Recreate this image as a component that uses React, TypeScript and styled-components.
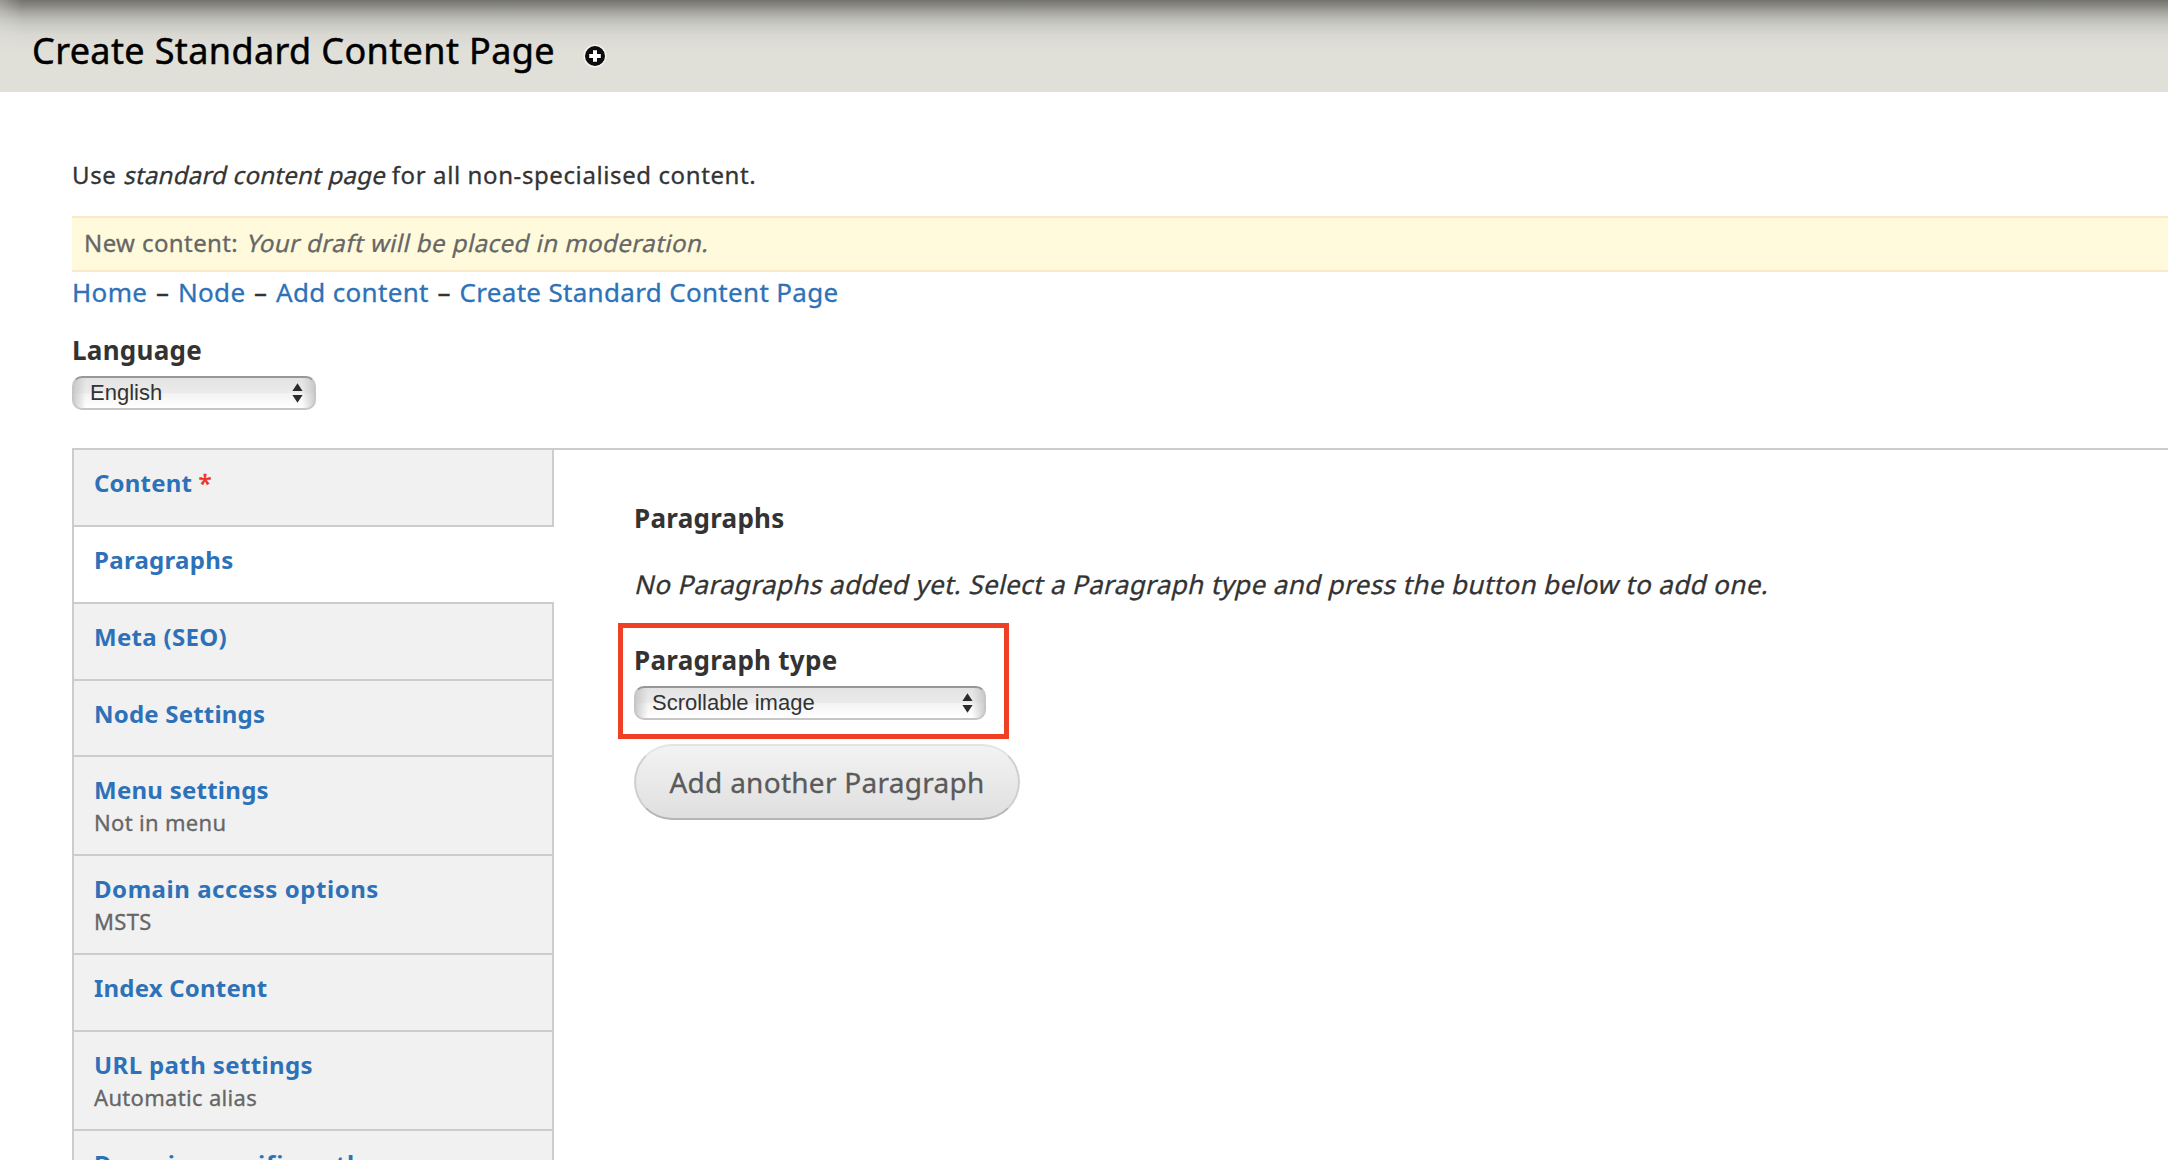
import React from "react";
import styled, { createGlobalStyle } from "styled-components";

const GlobalStyle = createGlobalStyle`
  * { box-sizing: border-box; }
  body {
    margin: 0;
    background: #fff;
    color: #333;
    font-family: "Noto Sans", "Open Sans", sans-serif;
  }
`;

const Page = styled.div`
  height: 1160px;
  overflow: hidden;
  white-space: nowrap;
`;

const Branding = styled.header`
  display: flex;
  align-items: flex-start;
  height: 92px;
  padding: 9px 0 0 32px;
  background:
    linear-gradient(to right, rgba(224, 224, 216, 0.35), rgba(224, 224, 216, 0) 22px),
    linear-gradient(#74746f 0, #8a8a84 6px, #a5a59e 12px, #bcbdb6 19px, #cccdc6 26px, #d8d7d1 34px, #dddcd6 43px, #e0e0d8 53px);
`;

const PageTitle = styled.h1`
  margin: 0;
  color: #000;
  font-size: 36px;
  font-weight: 400;
  line-height: 84px;
  letter-spacing: 0.38px;
  -webkit-text-stroke: 0.5px currentColor;
`;

const ShortcutIcon = styled.svg`
  margin: 35px 0 0 28px;
`;

const Main = styled.main`
  display: flex;
  flex-direction: column;
  padding-left: 72px;
`;

const HelpText = styled.p`
  margin: 65px 0 23px;
  font-size: 24px;
  line-height: 36px;
  letter-spacing: 0.6px;
  -webkit-text-stroke: 0.3px currentColor;
`;

/* Upright glyphs slanted about their baseline. */
const Slanted = styled.em<{ $tracking?: number }>`
  display: inline-block;
  font-style: normal;
  letter-spacing: ${(p) => p.$tracking ?? 0.25}px;
  transform: skewX(-13deg);
  transform-origin: 0 75%;
`;

const Notice = styled.div`
  height: 56px;
  padding-left: 12px;
  border: solid #fbe8c6;
  border-width: 2px 0;
  background: #fefadb;
  color: #666;
  font-size: 24px;
  line-height: 49px;
  letter-spacing: 0.4px;
  -webkit-text-stroke: 0.3px currentColor;
`;

const Breadcrumb = styled.nav`
  display: flex;
  gap: 8.7px;
  font-size: 26px;
  line-height: 40px;
  letter-spacing: 0.32px;
  -webkit-text-stroke: 0.3px currentColor;
`;

const Link = styled.a`
  color: #2d72b8;
`;

const Field = styled.div`
  display: flex;
  flex-direction: column;
  align-items: flex-start;
  gap: 8px;
`;

const LanguageField = styled(Field)`
  margin: 20px 0 38px;
`;

const Highlight = styled(Field)`
  width: 391px;
  height: 116px;
  margin: 21px 0 5px -16px;
  padding: 14px 0 0 11px;
  border: 5px solid #ee4025;
`;

const Label = styled.label`
  font-size: 26px;
  font-weight: 700;
  line-height: 36px;
  letter-spacing: 0.27px;
`;

const SelectBox = styled.div<{ $width: number }>`
  display: flex;
  align-items: center;
  justify-content: space-between;
  width: ${(p) => p.$width}px;
  height: 34px;
  padding: 0 11px 0 16px;
  border: 2px solid #c6c6c6;
  border-top-color: #979797;
  border-radius: 10px;
  background:
    linear-gradient(to right, rgba(190, 190, 190, 0.7), rgba(220, 220, 220, 0) 12px),
    linear-gradient(to left, rgba(190, 190, 190, 0.7), rgba(220, 220, 220, 0) 12px),
    linear-gradient(#e3e3e3, #ebebeb 50%, #f3f3f3 52%, #fff);
  font-family: "Liberation Sans", Arial, sans-serif;
  font-size: 22px;
  line-height: 30px;
`;

const TabsLayout = styled.section`
  display: flex;
  border-top: 2px solid #ccc;
`;

const TabList = styled.ul`
  width: 482px;
  margin: 0;
  padding: 0;
  border-left: 2px solid #ccc;
  list-style: none;
`;

const Tab = styled.li<{ $active?: boolean; $height: number }>`
  height: ${(p) => p.$height}px;
  padding: 15px 0 0 20px;
  border-bottom: 2px solid #ccc;
  background: ${(p) => (p.$active ? "#fff" : "#f1f1f1")};
  box-shadow: ${(p) => (p.$active ? "none" : "inset -2px 0 0 #cdcdcd")};
`;

const TabTitle = styled.div<{ $tracking: number }>`
  color: #2d72b8;
  font-size: 24px;
  font-weight: 700;
  line-height: 35px;
  letter-spacing: ${(p) => p.$tracking}px;
`;

const Required = styled.span`
  color: #ee3124;
  font-weight: 400;
  -webkit-text-stroke: 0.5px currentColor;
`;

const TabSummary = styled.div`
  color: #666;
  font-size: 22px;
  line-height: 30px;
  letter-spacing: 0.32px;
  -webkit-text-stroke: 0.3px currentColor;
`;

const Pane = styled.div`
  display: flex;
  flex-direction: column;
  align-items: flex-start;
  padding: 50px 0 0 80px;
`;

const EmptyText = styled(Slanted)`
  margin-top: 30px;
  font-size: 26px;
  line-height: 36px;
  -webkit-text-stroke: 0.3px currentColor;
`;

const AddButton = styled.button`
  width: 386px;
  height: 76px;
  padding: 0;
  border: 2px solid;
  border-color: #e4e4e4 #cfcfcf #b4b4b4;
  border-radius: 38px;
  background: linear-gradient(#f3f3f3, #dfdfdf);
  color: #5a5a5a;
  font-family: inherit;
  font-size: 28px;
  letter-spacing: 0.27px;
  -webkit-text-stroke: 0.3px currentColor;
`;

const tabs = [
  { title: "Content", height: 77, tracking: 0.2, required: true },
  { title: "Paragraphs", height: 77, tracking: 0.3, active: true },
  { title: "Meta (SEO)", height: 77, tracking: 0.3 },
  { title: "Node Settings", height: 76, tracking: 0.2 },
  { title: "Menu settings", height: 99, tracking: 0.25, summary: "Not in menu" },
  { title: "Domain access options", height: 99, tracking: 0.54, summary: "MSTS" },
  { title: "Index Content", height: 77, tracking: 0.2 },
  { title: "URL path settings", height: 99, tracking: 0.38, summary: "Automatic alias" },
  { title: "Domain-specific paths", height: 99, tracking: 0.85 },
];

const crumbs = ["Home", "Node", "Add content", "Create Standard Content Page"];

function Select({ value, width }: { value: string; width: number }) {
  return (
    <SelectBox $width={width}>
      <span>{value}</span>
      <svg width="11" height="20" viewBox="0 0 11 20" fill="#2b2b2b">
        <path d="M5.5 0.3 L10.6 8 H0.4 Z M0.4 12 H10.6 L5.5 19.7 Z" />
      </svg>
    </SelectBox>
  );
}

export default function App() {
  return (
    <Page>
      <GlobalStyle />
      <Branding>
        <PageTitle>Create Standard Content Page</PageTitle>
        <ShortcutIcon width="24" height="24" viewBox="0 0 24 24">
          <circle cx="12" cy="12" r="11.6" fill="#f2f2ee" />
          <circle cx="12" cy="12" r="10" fill="#0c0c0c" />
          <path d="M12 6.2 V17.8 M6.2 12 H17.8" stroke="#fff" strokeWidth="4" />
        </ShortcutIcon>
      </Branding>
      <Main>
        <HelpText>
          Use <Slanted>standard content page</Slanted> for all non-specialised content.
        </HelpText>
        <Notice>
          New content: <Slanted $tracking={0.47}>Your draft will be placed in moderation.</Slanted>
        </Notice>
        <Breadcrumb>
          {crumbs.map((crumb, i) => (
            <React.Fragment key={crumb}>
              {i > 0 && <span>–</span>}
              <Link>{crumb}</Link>
            </React.Fragment>
          ))}
        </Breadcrumb>
        <LanguageField>
          <Label>Language</Label>
          <Select value="English" width={244} />
        </LanguageField>
        <TabsLayout>
          <TabList>
            {tabs.map((tab) => (
              <Tab key={tab.title} $active={tab.active} $height={tab.height}>
                <TabTitle $tracking={tab.tracking}>
                  {tab.title}
                  {tab.required && <Required> *</Required>}
                </TabTitle>
                {tab.summary && <TabSummary>{tab.summary}</TabSummary>}
              </Tab>
            ))}
          </TabList>
          <Pane>
            <Label>Paragraphs</Label>
            <EmptyText $tracking={0.39}>
              No Paragraphs added yet. Select a Paragraph type and press the button below to add one.
            </EmptyText>
            <Highlight>
              <Label>Paragraph type</Label>
              <Select value="Scrollable image" width={352} />
            </Highlight>
            <AddButton>Add another Paragraph</AddButton>
          </Pane>
        </TabsLayout>
      </Main>
    </Page>
  );
}
